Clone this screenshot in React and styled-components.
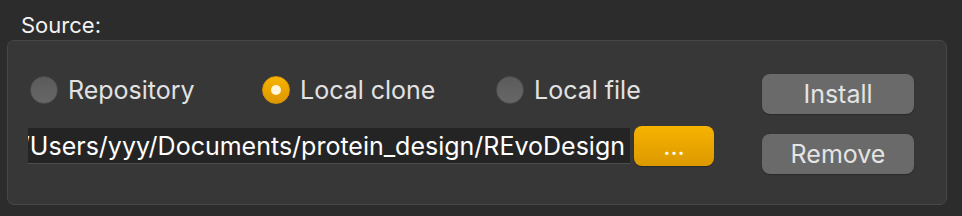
import React from "react";
import styled, { createGlobalStyle } from "styled-components";

const GlobalStyle = createGlobalStyle`
  html, body {
    margin: 0;
    padding: 0;
    background: #2c2c2c;
  }
  body {
    font-family: Inter, "Noto Sans", "Liberation Sans", sans-serif;
    -webkit-font-smoothing: antialiased;
  }
`;

const StyledPage = styled.div`
  width: 962px;
  height: 216px;
  box-sizing: border-box;
  padding: 0 15px 0 7px;
  overflow: hidden;
`;

const StyledTitle = styled.div`
  height: 40px;
  box-sizing: border-box;
  padding: 13px 0 0 14px;
  font-size: 22px;
  line-height: 24px;
  color: #f2f2f2;
`;

const StyledGroup = styled.section`
  display: flex;
  align-items: flex-start;
  gap: 48px;
  height: 165px;
  box-sizing: border-box;
  padding: 33px 32px 0 20px;
  background: #373737;
  border: 1px solid #474747;
  border-radius: 7px;
`;

const StyledLeft = styled.div`
  display: flex;
  flex-direction: column;
  gap: 22px;
  margin-top: 2px;
  width: 686px;
`;

const StyledRadioRow = styled.div`
  display: grid;
  grid-template-columns: 232px 234px auto;
  padding-left: 2px;
`;

const StyledRadio = styled.label`
  display: flex;
  align-items: center;
  gap: 10px;
  height: 28px;
  font-size: 25px;
  color: #e2e2e2;
`;

const StyledRadioCircle = styled.span`
  position: relative;
  width: 28px;
  height: 28px;
  box-sizing: border-box;
  border-radius: 50%;
  flex-shrink: 0;
  background: ${(props) =>
    props.checked
      ? "linear-gradient(#f6b300, #de9800)"
      : "linear-gradient(#5b5b5b, #676767)"};
  border: 1px solid ${(props) => (props.checked ? "#d79400" : "#4d4d4d")};

  &::after {
    content: "";
    display: ${(props) => (props.checked ? "block" : "none")};
    position: absolute;
    left: 8px;
    top: 8px;
    width: 10px;
    height: 10px;
    border-radius: 50%;
    background: #fff6dc;
  }
`;

const StyledPathRow = styled.div`
  display: flex;
  align-items: center;
  gap: 4px;
`;

const StyledPathField = styled.div`
  display: flex;
  justify-content: flex-end;
  align-items: center;
  width: 602px;
  height: 36px;
  box-sizing: border-box;
  padding-right: 5px;
  overflow: hidden;
  white-space: nowrap;
  background: #242424;
  border-bottom: 1px solid #4e4e4e;
  font-size: 25px;
  color: #ffffff;
`;

const StyledButton = styled.button`
  display: flex;
  align-items: center;
  justify-content: center;
  width: ${(props) => props.width || 152}px;
  height: 40px;
  padding: 0;
  border: none;
  border-radius: 8px;
  font-family: inherit;
  font-size: 25px;
  color: ${(props) => (props.primary ? "#ffffff" : "#e4e4e4")};
  background: ${(props) =>
    props.primary ? "linear-gradient(#f7b300, #dc9900)" : "#6a6a6a"};
  box-shadow: 0 1px 1px rgba(0, 0, 0, 0.25);
`;

const StyledButtons = styled.div`
  display: flex;
  flex-direction: column;
  gap: 20px;
`;

export default function App() {
  const sources = [
    { id: "repo", label: "Repository", checked: false },
    { id: "clone", label: "Local clone", checked: true },
    { id: "file", label: "Local file", checked: false }
  ];

  return (
    <>
      <GlobalStyle />
      <StyledPage>
        <StyledTitle>Source:</StyledTitle>
        <StyledGroup>
          <StyledLeft>
            <StyledRadioRow>
              {sources.map((source) => (
                <StyledRadio key={source.id}>
                  <StyledRadioCircle checked={source.checked} />
                  {source.label}
                </StyledRadio>
              ))}
            </StyledRadioRow>
            <StyledPathRow>
              <StyledPathField>
                /Users/yyy/Documents/protein_design/REvoDesign
              </StyledPathField>
              <StyledButton primary width={80}>
                ...
              </StyledButton>
            </StyledPathRow>
          </StyledLeft>
          <StyledButtons>
            <StyledButton>Install</StyledButton>
            <StyledButton>Remove</StyledButton>
          </StyledButtons>
        </StyledGroup>
      </StyledPage>
    </>
  );
}
